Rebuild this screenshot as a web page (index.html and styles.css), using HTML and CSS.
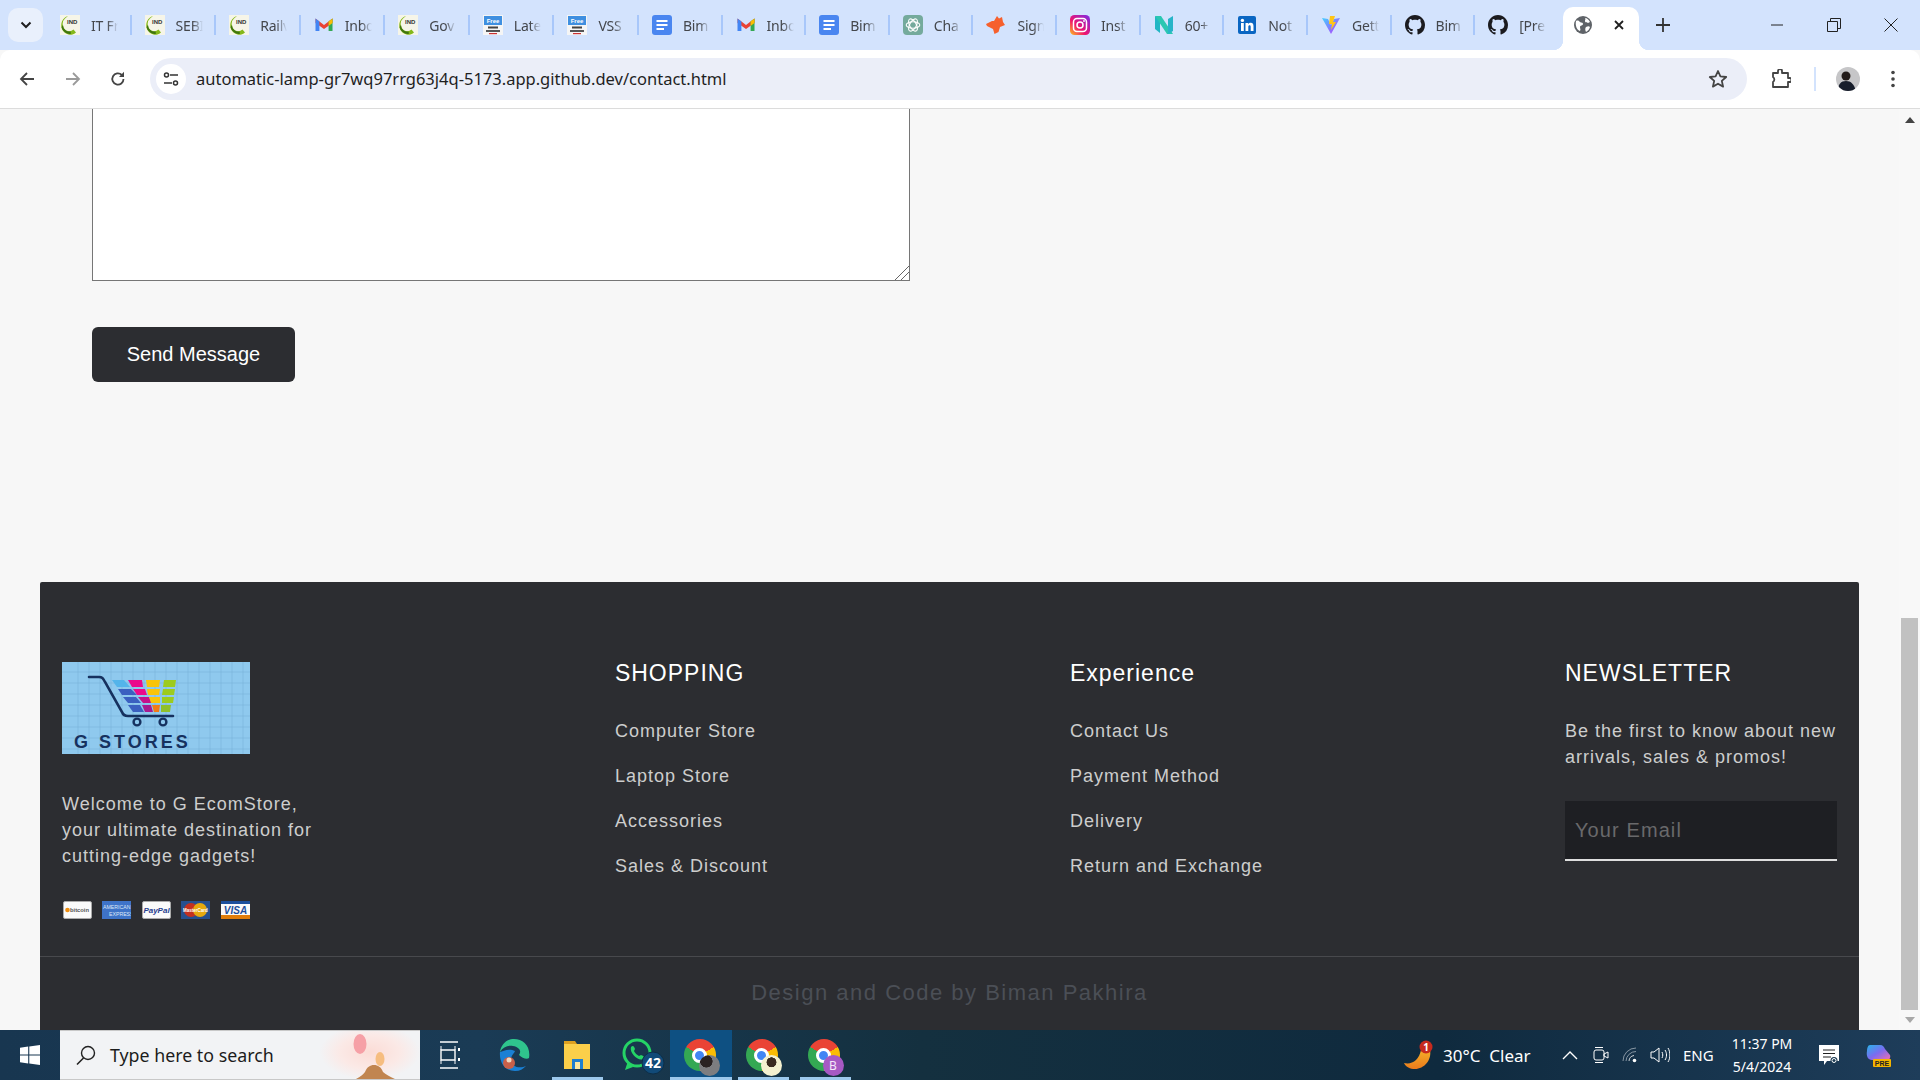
FILE: index.html
```html
<!DOCTYPE html>
<html lang="en">
<head>
<meta charset="utf-8">
<title>Contact</title>
<link rel="stylesheet" href="styles.css">
</head>
<body>
<svg class="defs" width="0" height="0" aria-hidden="true">
  <defs>
    <linearGradient id="ig" x1="0" y1="1" x2="1" y2="0">
      <stop offset="0" stop-color="#fdc31c"/><stop offset=".4" stop-color="#f0146e"/><stop offset="1" stop-color="#7a2be8"/>
    </linearGradient>
    <linearGradient id="viteA" x1="0" y1="0" x2="1" y2="1">
      <stop offset="0" stop-color="#41d1ff"/><stop offset="1" stop-color="#bd34fe"/>
    </linearGradient>
    <linearGradient id="sun" x1="0" y1="0" x2="0" y2="1">
      <stop offset="0" stop-color="#f6b52a"/><stop offset="1" stop-color="#ea7a1c"/>
    </linearGradient>
    <linearGradient id="cop" x1="0" y1="0" x2="1" y2="1">
      <stop offset="0" stop-color="#27b4ea"/><stop offset=".5" stop-color="#7b6bf0"/><stop offset="1" stop-color="#f06fb0"/>
    </linearGradient>
    <radialGradient id="glow">
      <stop offset="0" stop-color="#fbdcd6"/><stop offset=".6" stop-color="#fbe9e6"/><stop offset="1" stop-color="#f2f3f5"/>
    </radialGradient>
    <symbol id="i-ind" viewBox="0 0 20 20">
      <rect width="20" height="20" fill="#f6f5e8"/>
      <path d="M8 1A9 9.500 0 1 0 16 17.500L13.500 14.500A5.500 6 0 0 1 5 3.500z" fill="#84b81a"/>
      <path d="M1.500 12A8.500 8.500 0 0 0 11 18.800L10.500 16.500A6.500 6.500 0 0 1 3 10z" fill="#3f7410"/>
      <text x="7" y="9" class="ind">IND</text>
    </symbol>
    <symbol id="i-free" viewBox="0 0 20 20">
      <rect width="20" height="20" fill="#f5f5f5"/>
      <rect x="1" y="1" width="18" height="9" fill="#3f8fe0"/>
      <text x="10" y="8" class="free">Free</text>
      <rect x="5" y="11.500" width="10" height="2" fill="#444"/>
      <rect x="3" y="15" width="14" height="2" fill="#555"/>
      <rect x="6" y="18" width="8" height="1.200" fill="#c33"/>
    </symbol>
    <symbol id="i-gmail" viewBox="0 0 20 20">
      <path d="M1.500 3.500 10 10 18.500 3.500 18.500 8 10 14 1.500 8z" fill="#ea4335"/>
      <path d="M5.400 6.500 1.500 3.500V16h3.900z" fill="#4285f4"/>
      <path d="M14.600 6.500 18.500 3.500V16h-3.900z" fill="#34a853"/>
      <path d="M14.600 6.500 18.500 3.500V8l-3.900 3z" fill="#fbbc04"/>
    </symbol>
    <symbol id="i-docs" viewBox="0 0 20 20">
      <rect width="20" height="20" rx="3" fill="#4a86f0"/>
      <rect x="4.500" y="5" width="11" height="2" fill="#fff"/>
      <rect x="4.500" y="9" width="11" height="2" fill="#fff"/>
      <rect x="4.500" y="13" width="7.500" height="2" fill="#fff"/>
    </symbol>
    <symbol id="i-gpt" viewBox="0 0 20 20">
      <rect width="20" height="20" rx="4" fill="#74aa9c"/>
      <g fill="none" stroke="#fff" stroke-width="1.100">
        <ellipse cx="10" cy="10" rx="6.800" ry="3.300"/>
        <ellipse cx="10" cy="10" rx="6.800" ry="3.300" transform="rotate(60 10 10)"/>
        <ellipse cx="10" cy="10" rx="6.800" ry="3.300" transform="rotate(120 10 10)"/>
      </g>
    </symbol>
    <symbol id="i-fox" viewBox="0 0 20 20">
      <path d="M11 1 13 3.500 16 2 17 7 19 10 14 12 12.500 17 8.500 19 7 14 1 11 0 9 6 6 8 6z" fill="#f6602d"/>
    </symbol>
    <symbol id="i-insta" viewBox="0 0 20 20">
      <rect width="20" height="20" rx="4.500" fill="url(#ig)"/>
      <rect x="3.500" y="3.500" width="13" height="13" rx="3.500" fill="none" stroke="#fff" stroke-width="1.500"/>
      <circle cx="10" cy="10" r="3" fill="none" stroke="#fff" stroke-width="1.500"/>
      <circle cx="14" cy="6" r=".9" fill="#fff"/>
    </symbol>
    <symbol id="i-n" viewBox="0 0 20 20">
      <path d="M1 1 6 4V18L1 14z" fill="#21b6c4"/>
      <path d="M1 1 7 1 19 19 13 19z" fill="#2ac7b2"/>
      <path d="M19 1V16L14 19V4z" fill="#27b4c8"/>
    </symbol>
    <symbol id="i-in" viewBox="0 0 20 20">
      <rect x="1" y="1" width="18" height="18" rx="2" fill="#0a66c2"/>
      <rect x="4" y="8" width="2.800" height="8" fill="#fff"/>
      <circle cx="5.400" cy="5.400" r="1.700" fill="#fff"/>
      <path d="M8.500 8h2.700v1.200c.6-.9 1.500-1.400 2.600-1.400 2 0 2.700 1.300 2.700 3.400V16h-2.800v-4.200c0-1-.3-1.600-1.100-1.600-.9 0-1.300.7-1.300 1.700V16H8.500z" fill="#fff"/>
    </symbol>
    <symbol id="i-vite" viewBox="0 0 20 20">
      <path d="M1 3 10 19 19 3 13 4 10 10 7 4z" fill="url(#viteA)"/>
      <path d="M9 1h5l-2 6h3l-5 8 1-6H8z" fill="#ffc517"/>
    </symbol>
    <symbol id="i-gh" viewBox="0 0 16 16">
      <path fill="#1b1b1f" d="M8 0C3.580 0 0 3.580 0 8c0 3.540 2.290 6.530 5.470 7.590.4.070.55-.17.55-.38 0-.19-.01-.82-.01-1.490-2.010.37-2.530-.49-2.690-.94-.09-.23-.48-.94-.82-1.130-.28-.15-.68-.52-.01-.53.63-.01 1.080.58 1.230.82.72 1.210 1.870.87 2.330.66.07-.52.28-.87.51-1.070-1.780-.2-3.640-.89-3.640-3.950 0-.87.31-1.590.82-2.150-.08-.2-.36-1.020.08-2.120 0 0 .67-.21 2.200.82.64-.18 1.320-.27 2-.27s1.360.09 2 .27c1.530-1.040 2.200-.82 2.200-.82.44 1.100.16 1.920.08 2.120.51.56.82 1.270.82 2.150 0 3.070-1.870 3.750-3.650 3.950.29.25.54.73.54 1.480 0 1.070-.01 1.930-.01 2.200 0 .21.15.46.55.38A8.010 8.010 0 0 0 16 8c0-4.420-3.580-8-8-8z"/>
    </symbol>
  </defs>
</svg>

<header class="tabstrip">
  <button class="tabsearch" aria-label="Search tabs">
    <svg width="12" height="8" viewBox="0 0 12 8"><path d="M1.500 1.500 6 6l4.500-4.500" fill="none" stroke="#1f1f1f" stroke-width="2"/></svg>
  </button>
  <div class="tab"><svg class="fav"><use href="#i-ind"/></svg><span class="tab-label">IT Fr</span></div>
  <div class="tab"><svg class="fav"><use href="#i-ind"/></svg><span class="tab-label">SEBI</span></div>
  <div class="tab"><svg class="fav"><use href="#i-ind"/></svg><span class="tab-label">Railv</span></div>
  <div class="tab"><svg class="fav"><use href="#i-gmail"/></svg><span class="tab-label">Inbo</span></div>
  <div class="tab"><svg class="fav"><use href="#i-ind"/></svg><span class="tab-label">Gov</span></div>
  <div class="tab"><svg class="fav"><use href="#i-free"/></svg><span class="tab-label">Late</span></div>
  <div class="tab"><svg class="fav"><use href="#i-free"/></svg><span class="tab-label">VSS</span></div>
  <div class="tab"><svg class="fav"><use href="#i-docs"/></svg><span class="tab-label">Bim</span></div>
  <div class="tab"><svg class="fav"><use href="#i-gmail"/></svg><span class="tab-label">Inbo</span></div>
  <div class="tab"><svg class="fav"><use href="#i-docs"/></svg><span class="tab-label">Bim</span></div>
  <div class="tab"><svg class="fav"><use href="#i-gpt"/></svg><span class="tab-label">Cha</span></div>
  <div class="tab"><svg class="fav"><use href="#i-fox"/></svg><span class="tab-label">Sign</span></div>
  <div class="tab"><svg class="fav"><use href="#i-insta"/></svg><span class="tab-label">Inst</span></div>
  <div class="tab"><svg class="fav"><use href="#i-n"/></svg><span class="tab-label">60+</span></div>
  <div class="tab"><svg class="fav"><use href="#i-in"/></svg><span class="tab-label">Not</span></div>
  <div class="tab"><svg class="fav"><use href="#i-vite"/></svg><span class="tab-label">Gett</span></div>
  <div class="tab"><svg class="fav"><use href="#i-gh"/></svg><span class="tab-label">Bim</span></div>
  <div class="tab tab-last"><svg class="fav"><use href="#i-gh"/></svg><span class="tab-label">[Pre</span></div>
  <div class="tab-active">
    <svg width="18" height="18" viewBox="0 0 18 18"><circle cx="9" cy="9" r="9" fill="#5f6368"/><path d="M2 5c2-1 3 0 4 1s3 0 3 2-3 1-3 3 1 2 0 4C3 14 1 10 2 5zM11 2c2 0 4 2 5 4l-2 1c-1-1-3 0-3-2s1-1 0-3zM12 11c2-1 3-1 4 0-.5 2-2 4-4 5-1-2-1-4 0-5z" fill="#fff"/></svg>
    <svg class="tab-close" width="12" height="12" viewBox="0 0 12 12"><path d="M2 2l8 8M10 2l-8 8" stroke="#1f1f1f" stroke-width="1.800"/></svg>
  </div>
  <div class="newtab"><svg width="14" height="14" viewBox="0 0 14 14"><path d="M7 0v14M0 7h14" stroke="#333" stroke-width="1.800"/></svg></div>
  <div class="winctl">
    <svg width="14" height="14" viewBox="0 0 14 14"><path d="M1 7h12" stroke="#222" stroke-width="1"/></svg>
    <svg width="14" height="14" viewBox="0 0 14 14"><path d="M.5 3.500h10v10H.5zM3.500 3.500v-3h10v10h-3" fill="none" stroke="#222"/></svg>
    <svg width="14" height="14" viewBox="0 0 14 14"><path d="M.5.500l13 13M13.500.500l-13 13" stroke="#222"/></svg>
  </div>
</header>

<nav class="toolbar">
  <div class="navbtns">
    <svg width="16" height="16" viewBox="0 0 16 16"><path d="M15 8H2M8 2 2 8l6 6" fill="none" stroke="#444" stroke-width="1.800"/></svg>
    <svg width="16" height="16" viewBox="0 0 16 16"><path d="M1 8h13M8 2l6 6-6 6" fill="none" stroke="#9a9a9a" stroke-width="1.800"/></svg>
    <svg width="16" height="16" viewBox="0 0 16 16"><path d="M13.500 8A5.600 5.600 0 1 1 11.800 4" fill="none" stroke="#444" stroke-width="1.800"/><path d="M14 0.800V6H9z" fill="#444"/></svg>
  </div>
  <div class="omnibox">
    <span class="siteinfo"><svg width="16" height="16" viewBox="0 0 16 16"><circle cx="3.500" cy="4" r="2" fill="none" stroke="#333" stroke-width="1.500"/><path d="M7 4h8M1 12h8" stroke="#333" stroke-width="1.500"/><circle cx="12.500" cy="12" r="2" fill="none" stroke="#333" stroke-width="1.500"/></svg></span>
    <span class="url">automatic-lamp-gr7wq97rrg63j4q-5173.app.github.dev/contact.html</span>
    <svg class="star" width="20" height="20" viewBox="0 0 20 20"><path d="M10 2l2.400 5.400 5.800.6-4.400 3.900 1.300 5.700L10 14.700l-5.100 2.900 1.300-5.700L1.800 8l5.800-.6z" fill="none" stroke="#444" stroke-width="1.800" stroke-linejoin="round"/></svg>
  </div>
  <div class="toolbtns">
    <svg width="20" height="20" viewBox="0 0 20 20"><path d="M2 5h5V3a2 2 0 0 1 4 0v2h6v5h1.500a2 2 0 0 1 0 4H17v5H2v-5a3 3 0 0 0 0-5z" fill="none" stroke="#444" stroke-width="1.800" stroke-linejoin="round" transform="translate(0 -1)"/></svg>
    <span class="tooldiv"></span>
    <svg class="avatar" width="24" height="24" viewBox="0 0 24 24"><defs><clipPath id="av"><circle cx="12" cy="12" r="12"/></clipPath></defs><g clip-path="url(#av)"><rect width="24" height="24" fill="#c6c6c8"/><circle cx="10" cy="9" r="4.500" fill="#231c1a"/><path d="M2 24c0-7 3-10 8-10s8 3 10 10z" fill="#171d2b"/></g></svg>
    <svg class="dots" width="4" height="18" viewBox="0 0 4 18"><circle cx="2" cy="2.500" r="1.800" fill="#444"/><circle cx="2" cy="9" r="1.800" fill="#444"/><circle cx="2" cy="15.500" r="1.800" fill="#444"/></svg>
  </div>
</nav>

<div class="viewport">
  <main class="page">
    <form class="contact-form">
      <textarea class="message" aria-label="Message"></textarea>
      <button type="button" class="send">Send Message</button>
    </form>
    <footer class="footer">
      <div class="footer-cols">
        <div class="col col-brand">
          <svg class="logo" width="188" height="92" viewBox="0 0 188 92">
            <rect width="188" height="92" fill="#8fc9ee"/>
            <path d="M0 10h188M0 21h188M0 32h188M0 43h188M0 54h188M0 65h188M0 76h188M0 87h188M16 0v92M27 0v92M38 0v92M49 0v92M60 0v92M71 0v92M82 0v92M93 0v92M104 0v92M115 0v92M126 0v92M137 0v92M148 0v92M159 0v92M170 0v92M181 0v92" stroke="#6fa9d2" stroke-width=".6" opacity=".7"/>
            <path d="M27 15h10c3 0 4 1 6 5l17 30c1 3 3 4 6 4h45" fill="none" stroke="#16315f" stroke-width="2.600" stroke-linecap="round"/>
            <circle cx="75" cy="60" r="3.400" fill="none" stroke="#16315f" stroke-width="2.400"/>
            <circle cx="101" cy="60" r="3.400" fill="none" stroke="#16315f" stroke-width="2.400"/>
            <path d="M50 18h12l6 7H55z" fill="#54b4ea"/><path d="M66 18h14l1 7H70z" fill="#ea0a8c"/><path d="M84 18h14l-1 7H85z" fill="#f9c409"/><path d="M102 18h12l-1 7h-12z" fill="#9dcb1e"/>
            <path d="M56 27h13l6 6H60z" fill="#3b60c0"/><path d="M71 27h12l2 6H75z" fill="#ea0a8c"/><path d="M85 27h13l-1 6H86z" fill="#f9c409"/><path d="M101 27h12l-1 6h-12z" fill="#9dcb1e"/>
            <path d="M61 35h13l5 6H66z" fill="#3b60c0"/><path d="M76 35h11l3 6H81z" fill="#c4128c"/><path d="M87 35h11v6H89z" fill="#f9c409"/><path d="M100 35h12l-1 6h-11z" fill="#9dcb1e"/>
            <path d="M66 43h12l4 7H71z" fill="#3b60c0"/><path d="M80 43h9l2 7H83z" fill="#a81a90"/><path d="M90 43h8l-1 7h-5z" fill="#f27a16"/><path d="M99 43h10l-1 7h-9z" fill="#8fc02a"/>
            <text x="12" y="86" class="logo-text">G STORES</text>
          </svg>
          <p class="brand-text">Welcome to G EcomStore, your ultimate destination for cutting-edge gadgets!</p>
          <div class="cards">
            <svg class="card" viewBox="0 0 29 18"><rect x=".5" y=".5" width="28" height="17" rx="1.500" fill="#fafafa" stroke="#aaa"/><circle cx="4.500" cy="9" r="2.300" fill="#f08f12"/><text x="7" y="11.200" class="card-t card-bit">bitcoin</text></svg>
            <svg class="card" viewBox="0 0 29 18"><rect width="29" height="18" fill="#3e73c8"/><text x="1" y="8" class="card-t card-ae">AMERICAN</text><text x="7" y="15" class="card-t card-ae">EXPRESS</text></svg>
            <svg class="card" viewBox="0 0 29 18"><rect x=".5" y=".5" width="28" height="17" rx="1.500" fill="#fafafa" stroke="#aaa"/><text x="14.500" y="12" class="card-t card-pp">PayPal</text></svg>
            <svg class="card" viewBox="0 0 29 18"><rect width="29" height="18" fill="#27508f"/><circle cx="10" cy="9" r="7" fill="#c4301f"/><circle cx="19" cy="9" r="7" fill="#e6a90f"/><text x="14.500" y="11" class="card-t card-mc">MasterCard</text></svg>
            <svg class="card" viewBox="0 0 29 18"><rect width="29" height="18" fill="#fafafa"/><rect width="29" height="3" fill="#1c4f9c"/><rect y="14" width="29" height="4" fill="#e07d0a"/><text x="14.500" y="12.500" class="card-t card-visa">VISA</text></svg>
          </div>
        </div>
        <div class="col">
          <h3 class="col-title">SHOPPING</h3>
          <ul class="links">
            <li>Computer Store</li><li>Laptop Store</li><li>Accessories</li><li>Sales &amp; Discount</li>
          </ul>
        </div>
        <div class="col">
          <h3 class="col-title">Experience</h3>
          <ul class="links">
            <li>Contact Us</li><li>Payment Method</li><li>Delivery</li><li>Return and Exchange</li>
          </ul>
        </div>
        <div class="col col-news">
          <h3 class="col-title">NEWSLETTER</h3>
          <p class="news-text">Be the first to know about new arrivals, sales &amp; promos!</p>
          <input class="news-input" type="text" placeholder="Your Email" aria-label="Your Email">
        </div>
      </div>
      <p class="credit">Design and Code by Biman Pakhira</p>
    </footer>
  </main>
  <aside class="scrollbar">
    <span class="arrow-up"></span>
    <span class="thumb"></span>
    <span class="arrow-down"></span>
  </aside>
</div>

<footer class="taskbar">
  <div class="start"><svg width="20" height="20" viewBox="0 0 20 20"><path d="M0 2.800 8.200 1.600V9.400H0zM9.300 1.500 20 0V9.400H9.300zM0 10.500H8.200V18.400L0 17.200zM9.300 10.500H20V20L9.300 18.500z" fill="#fff"/></svg></div>
  <div class="search">
    <svg width="22" height="22" viewBox="0 0 22 22"><circle cx="13" cy="9" r="6.500" fill="none" stroke="#222" stroke-width="1.400"/><path d="M8.500 14 2 20.500" stroke="#222" stroke-width="1.600"/></svg>
    <span class="search-text">Type here to search</span>
    <svg class="search-art" width="100" height="50" viewBox="0 0 100 50"><ellipse cx="50" cy="22" rx="50" ry="28" fill="url(#glow)"/><ellipse cx="40" cy="14" rx="6.500" ry="10" fill="#f6a0a6"/><ellipse cx="60" cy="29" rx="4.500" ry="7" fill="#f6bd80"/><path d="M34 50c6-3 9-5 11-8 2-5 5-7 9-7s7 2 9 7c3 3 8 5 14 8z" fill="#c18550"/></svg>
  </div>
  <div class="task task-first">
    <svg class="taskview" width="22" height="30" viewBox="0 0 22 30"><path d="M2 2h18M2 28h18M3 10h14v10H3z" fill="none" stroke="#fff" stroke-width="1.400"/><path d="M3 6v4M3 20v4M17 6v4M17 20v4" stroke="#fff"/><path d="M21 8v3M21 18v3" stroke="#fff" stroke-width="2"/></svg>
  </div>
  <div class="task">
    <svg width="32" height="34" viewBox="0 0 32 34"><path d="M30 20C32 8 24 1 15 1 7 1 2 7 1 14c3-5 8-7 13-6 6 1 9 5 6 9 3 3 8 5 10 3z" fill="#2fc48d"/><path d="M1 14c-1 10 5 19 15 19 5 0 8-2 11-5-6 3-15 1-15-6 0-5 3-6 4-9-6-3-12 0-15 1z" fill="#1b80d4"/><circle cx="10" cy="25" r="6" fill="#c8604a"/><circle cx="10" cy="22" r="2.500" fill="#f0d9c0"/></svg>
  </div>
  <div class="task task-open">
    <svg width="28" height="32" viewBox="0 0 28 32"><path d="M1 2h11l2 3H1z" fill="#dea020"/><rect x="1" y="5" width="26" height="25" fill="#fbcf4a"/><rect x="9" y="20" width="11" height="10" fill="#1f7fcf"/><rect x="12" y="23" width="5" height="7" fill="#fbe8a0"/></svg>
  </div>
  <div class="task">
    <svg class="wa" width="48" height="40" viewBox="0 0 48 40"><circle cx="17" cy="18" r="13" fill="none" stroke="#25d366" stroke-width="3"/><path d="M5 35l3-9 5 6z" fill="#25d366"/><path d="M11 12c2-2 3-1 4 2l-1 2c1 2 3 4 5 5l2-1c3 1 4 2 2 4-4 3-14-6-12-12z" fill="#25d366"/><circle cx="33" cy="28" r="11" fill="#114a78" stroke="#0d2e47"/><text x="33" y="33" class="wa-badge">42</text></svg>
  </div>
  <div class="task task-active"><span class="chrome"><span class="chrome-eye"></span><span class="chrome-av chrome-av-a"></span></span></div>
  <div class="task task-open"><span class="chrome"><span class="chrome-eye"></span><span class="chrome-av chrome-av-b"></span></span></div>
  <div class="task task-open"><span class="chrome"><span class="chrome-eye"></span><span class="chrome-av chrome-av-c">B</span></span></div>
  <div class="tray">
    <div class="weather">
      <svg width="30" height="30" viewBox="0 0 30 30"><path d="M1 23c8 2 15-3 17-13 2-3 7-3 9 0 2 10-6 19-15 19-5 0-9-2-11-6z" fill="url(#sun)"/><circle cx="23" cy="7" r="6.500" fill="#c72a1e"/><text x="23" y="10.500" class="wx-badge">1</text></svg>
      <span class="wx-text">30°C&nbsp; Clear</span>
    </div>
    <svg class="tray-i tray-chev" width="16" height="10" viewBox="0 0 16 10"><path d="M1 9l7-7 7 7" fill="none" stroke="#fff" stroke-width="1.400"/></svg>
    <svg class="tray-i tray-cam" width="16" height="20" viewBox="0 0 16 20"><rect x="1" y="5" width="10" height="10" rx="2" fill="none" stroke="#fff"/><path d="M11 9l4-2v6l-4-2zM2 2.500h8M2 17.500h8" fill="none" stroke="#fff"/></svg>
    <svg class="tray-i tray-wifi" width="16" height="16" viewBox="0 0 16 16"><path d="M1 14A13 13 0 0 1 14 1M4 14A10 10 0 0 1 14 4.500" fill="none" stroke="#8796a3"/><path d="M7 14a6 6 0 0 1 5-5.500" fill="none" stroke="#c8ced3"/><circle cx="12.500" cy="13.500" r="1.800" fill="#fff"/></svg>
    <svg class="tray-i tray-vol" width="20" height="18" viewBox="0 0 20 18"><path d="M1 6h3l5-4v14l-5-4H1zM12 6c1 2 1 4 0 6M15 4c2 3 2 7 0 10M18 2c2.500 4 2.500 10 0 14" fill="none" stroke="#fff"/></svg>
    <span class="lang">ENG</span>
    <div class="clock"><span>11:37 PM</span><span>5/4/2024</span></div>
    <svg class="tray-i tray-note" width="20" height="20" viewBox="0 0 20 20"><path d="M0 0h20v16H8l-3 4v-4H0z" fill="#fff"/><path d="M4 5h12M4 8.500h12M4 12h8" stroke="#222" stroke-width="1.200"/><circle cx="15" cy="15.500" r="3.500" fill="#1b3a52"/><circle cx="15" cy="15.500" r="2" fill="none" stroke="#fff"/></svg>
    <svg class="tray-i tray-cop" width="26" height="26" viewBox="0 0 26 26"><path d="M4 3h10c3 0 4 2 5 4l5 6c1 3-1 5-3 5H6C2 18 0 14 1 9c0-3 1-6 3-6z" fill="url(#cop)"/><rect x="7" y="17" width="18" height="8" rx="1" fill="#f4b400"/><text x="16" y="23.500" class="cop-t">PRE</text></svg>
  </div>
</footer>
</body>
</html>
```

FILE: styles.css
```css
* { box-sizing: border-box; }
html, body { margin: 0; padding: 0; height: 100%; overflow: hidden; }
body {
  display: flex;
  flex-direction: column;
  height: 1080px;
  width: 1920px;
  font-family: "Liberation Sans", Arial, sans-serif;
  background: #f7f7f7;
}
.defs { display: block; flex: none; height: 0; width: 0; }

/* Browser chrome */
.tabstrip {
  flex: none;
  height: 50px;
  background: #d3e3fd;
  display: flex;
  align-items: flex-start;
  padding-left: 8px;
  font-family: "Noto Sans", sans-serif;
}
.tabsearch {
  width: 35px;
  height: 34px;
  margin-top: 8px;
  margin-right: 4px;
  padding: 0;
  border: 0;
  border-radius: 10px;
  background: #e9f0fc;
  display: flex;
  align-items: center;
  justify-content: center;
}
.tab {
  flex: none;
  width: 83.640px;
  height: 50px;
  padding-left: 13px;
  display: flex;
  align-items: center;
  background: linear-gradient(#a8c7fa, #a8c7fa) right top 15px / 2px 20px no-repeat;
}
.tab:nth-child(-n+8) { width: 84.570px; }
.tab-last { background: none; }
.fav { width: 20px; height: 20px; flex: none; }
.tab-label {
  margin-left: 11px;
  width: 36px;
  white-space: nowrap;
  font-size: 14px;
  letter-spacing: -0.2px;
  color: #44474c;
  -webkit-mask-image: linear-gradient(90deg, #000 45%, transparent 75%);
  mask-image: linear-gradient(90deg, #000 45%, transparent 75%);
}
.tab-active {
  position: relative;
  flex: none;
  width: 76px;
  height: 43px;
  margin-top: 7px;
  margin-left: 4px;
  padding: 0 0 7px 11px;
  background: #fff;
  border-radius: 10px 10px 0 0;
  display: flex;
  align-items: center;
}
.tab-active::before,
.tab-active::after {
  content: "";
  position: absolute;
  bottom: 0;
  width: 10px;
  height: 10px;
}
.tab-active::before { left: -10px; background: radial-gradient(circle at 0 0, transparent 10px, #fff 10.500px); }
.tab-active::after { right: -10px; background: radial-gradient(circle at 100% 0, transparent 10px, #fff 10.500px); }
.tab-close { margin-left: 21px; }
.newtab { margin-left: 17px; height: 50px; display: flex; align-items: center; }
.winctl {
  margin-left: auto;
  width: 128px;
  margin-right: 22px;
  height: 50px;
  display: flex;
  justify-content: space-between;
  align-items: center;
}
.toolbar {
  flex: none;
  height: 59px;
  background: #fff;
  border-bottom: 1px solid #dcdcdc;
  border-radius: 10px 10px 0 0;
  display: flex;
  align-items: center;
  padding-bottom: 1px;
}
.navbtns {
  width: 150px;
  padding-left: 19px;
  padding-right: 24px;
  display: flex;
  justify-content: space-between;
  align-items: center;
}
.omnibox {
  width: 1597px;
  height: 42px;
  border-radius: 21px;
  background: #ebeef8;
  display: flex;
  align-items: center;
  padding-left: 6px;
}
.siteinfo {
  width: 30px;
  height: 30px;
  border-radius: 50%;
  background: #fff;
  display: flex;
  align-items: center;
  justify-content: center;
}
.url {
  margin-left: 10px;
  font-family: "Noto Sans", sans-serif;
  font-size: 16.500px;
  color: #1f1f1f;
  white-space: nowrap;
}
.star { margin-left: auto; margin-right: 19px; }
.toolbtns { flex: 1; display: flex; align-items: center; padding-left: 24px; }
.tooldiv { width: 2px; height: 24px; background: #d3e3fd; margin-left: 23px; }
.avatar { margin-left: 20px; }
.dots { margin-left: 31px; }

/* Page */
.viewport { flex: 1; min-height: 0; display: flex; overflow: hidden; }
.page { flex: 1; min-width: 0; overflow: hidden; background: #f7f7f7; }
.contact-form { padding-left: 92px; }
.message {
  display: block;
  width: 818px;
  height: 172px;
  background: #fff;
  border: 1px solid #767676;
  border-top: 0;
  margin: 0;
  padding: 0;
}
.message::-webkit-resizer {
  background: linear-gradient(135deg, transparent 0 51%, #666 51% 56%, transparent 56% 71%, #666 71% 76%, transparent 76%);
}
.send {
  display: block;
  margin-top: 46px;
  width: 203px;
  height: 55px;
  border: 0;
  border-radius: 6px;
  background: #2c2d31;
  color: #fff;
  font: 20px "Liberation Sans", Arial, sans-serif;
}
.footer {
  margin: 200px 0 0 40px;
  width: 1819px;
  background: #2c2d31;
  border-radius: 2px 2px 0 0;
  letter-spacing: 1px;
}
.footer-cols {
  display: flex;
  justify-content: space-between;
  padding: 79px 22px 37px;
  border-bottom: 1px solid #48494d;
}
.col-brand { width: 251px; padding-top: 1px; }
.logo { display: block; overflow: visible; }
.logo-text { font: 700 18px "Liberation Sans", Arial, sans-serif; letter-spacing: 3px; fill: #16315f; }
.brand-text, .news-text {
  margin: 0;
  font-size: 18px;
  line-height: 26px;
  color: #cdcdcd;
}
.brand-text { margin-top: 37px; }
.cards { margin-top: 32px; display: flex; gap: 10.400px; padding-left: 1px; }
.card { width: 29px; height: 18px; display: block; }
.card-t { font-family: "Liberation Sans", Arial, sans-serif; letter-spacing: 0; }
.card-bit { font-size: 5.800px; font-weight: 700; fill: #555; }
.card-ae { font-size: 5.200px; fill: #dfe8f6; }
.card-pp { font-size: 8px; font-weight: 700; font-style: italic; fill: #27408f; text-anchor: middle; }
.card-mc { font-size: 4.500px; font-weight: 700; fill: #fff; text-anchor: middle; }
.card-visa { font-size: 10px; font-weight: 700; font-style: italic; fill: #1c4f9c; text-anchor: middle; }
.col-title {
  margin: 0;
  font-size: 23px;
  font-weight: 400;
  line-height: 24px;
  color: #fff;
  letter-spacing: 1px;
}
.links {
  list-style: none;
  margin: 33px 0 0;
  padding: 0;
  display: flex;
  flex-direction: column;
  gap: 19px;
  font-size: 18px;
  line-height: 26px;
  color: #cdcdcd;
}
.col-news { width: 272px; }
.news-text { margin-top: 33px; }
.news-input {
  display: block;
  width: 272px;
  height: 60px;
  margin-top: 31px;
  padding: 0 10px;
  border: 0;
  border-bottom: 2px solid #dedede;
  background: #1e1f23;
  color: #ddd;
  font: 20px "Liberation Sans", Arial, sans-serif;
  letter-spacing: 1.100px;
}
.news-input::placeholder { color: #69696b; opacity: 1; }
.credit {
  margin: 0;
  padding: 22px 0 40px;
  text-align: center;
  font-size: 22px;
  line-height: 28px;
  letter-spacing: 1.500px;
  color: #4b4f56;
}

/* Scrollbar */
.scrollbar {
  flex: none;
  width: 21px;
  background: #f8f8f8;
  display: flex;
  flex-direction: column;
  align-items: center;
  padding-top: 8px;
}
.arrow-up { width: 0; height: 0; border: 5.500px solid transparent; border-top: 0; border-bottom: 6px solid #444; }
.thumb { width: 17px; height: 392px; margin-top: 495px; background: #c1c1c1; }
.arrow-down { width: 0; height: 0; margin-top: 7px; border: 5.500px solid transparent; border-bottom: 0; border-top: 6px solid #a8a8a8; }

/* Taskbar */
.taskbar {
  flex: none;
  height: 50px;
  display: flex;
  align-items: stretch;
  color: #fff;
  background: linear-gradient(90deg, #183650 0%, #1a3b55 25%, #14303f 48%, #0f2a3e 75%, #1e3d5a 100%);
  font-family: "Noto Sans", sans-serif;
}
.start { width: 60px; display: flex; align-items: center; justify-content: center; }
.search {
  width: 360px;
  display: flex;
  align-items: center;
  padding-left: 15px;
  background: #f2f3f5;
  border: 2px solid #c8c8c8;
  border-width: 1px 0;
  overflow: hidden;
}
.search-text { margin-left: 13px; font-size: 17.800px; color: #1c1c1c; white-space: nowrap; }
.search-art { margin-left: auto; flex: none; }
.task { width: 62px; display: flex; align-items: center; justify-content: center; }
.task-first { width: 64px; }
.taskview { margin-right: 7px; }
.wa { margin-left: 10px; }
.task-open { background: linear-gradient(#9cc8ec, #9cc8ec) center bottom / 51px 3px no-repeat; }
.task-active { background: linear-gradient(#9cc8ec, #9cc8ec) center bottom / 100% 3px no-repeat, #0e5082; }
.chrome {
  width: 32px;
  height: 32px;
  margin-right: 3px;
  border-radius: 50%;
  position: relative;
  display: flex;
  align-items: center;
  justify-content: center;
  background: conic-gradient(from -60deg, #ea4335 0 120deg, #fbbc04 120deg 240deg, #34a853 240deg 360deg);
}
.chrome-eye { width: 15px; height: 15px; border-radius: 50%; background: #4285f4; border: 3px solid #fff; }
.chrome-av {
  position: absolute;
  right: -4px;
  bottom: -5px;
  width: 21px;
  height: 21px;
  border-radius: 50%;
  display: flex;
  align-items: center;
  justify-content: center;
  font-size: 12px;
}
.chrome-av-a { background: radial-gradient(circle at 35% 30%, #2a2222 0 30%, #7d7d80 32%); }
.chrome-av-b { background: radial-gradient(circle at 50% 35%, #3a2a20 0 28%, #f4f0cf 30%); }
.chrome-av-c { background: #a759c4; color: #f5e6fa; }
.tray { margin-left: auto; display: flex; align-items: center; }
.weather { display: flex; align-items: center; }
.wx-text { margin-left: 10px; font-size: 17px; width: 119px; white-space: nowrap; }
.tray-i { flex: none; display: block; }
.tray-chev { margin-right: 15px; }
.tray-cam { margin-right: 13px; }
.tray-wifi { margin-right: 12px; }
.tray-vol { margin-right: 13px; }
.lang { font-size: 15px; width: 49px; }
.clock { display: flex; flex-direction: column; align-items: center; font-size: 14px; line-height: 23px; width: 60px; white-space: nowrap; }
.tray-note { margin-left: 27px; }
.tray-cop { margin-left: 27px; margin-right: 28px; }
.wa-badge { font: 700 14px "Noto Sans", sans-serif; fill: #fff; text-anchor: middle; }
.wx-badge { font: 700 10px "Noto Sans", sans-serif; fill: #fff; text-anchor: middle; }
.cop-t { font: 700 7px "Liberation Sans", sans-serif; fill: #222; text-anchor: middle; }
.ind { font: 700 6px "Liberation Sans", sans-serif; fill: #333; }
.free { font: 700 6px "Liberation Sans", sans-serif; fill: #fff; text-anchor: middle; }
```
